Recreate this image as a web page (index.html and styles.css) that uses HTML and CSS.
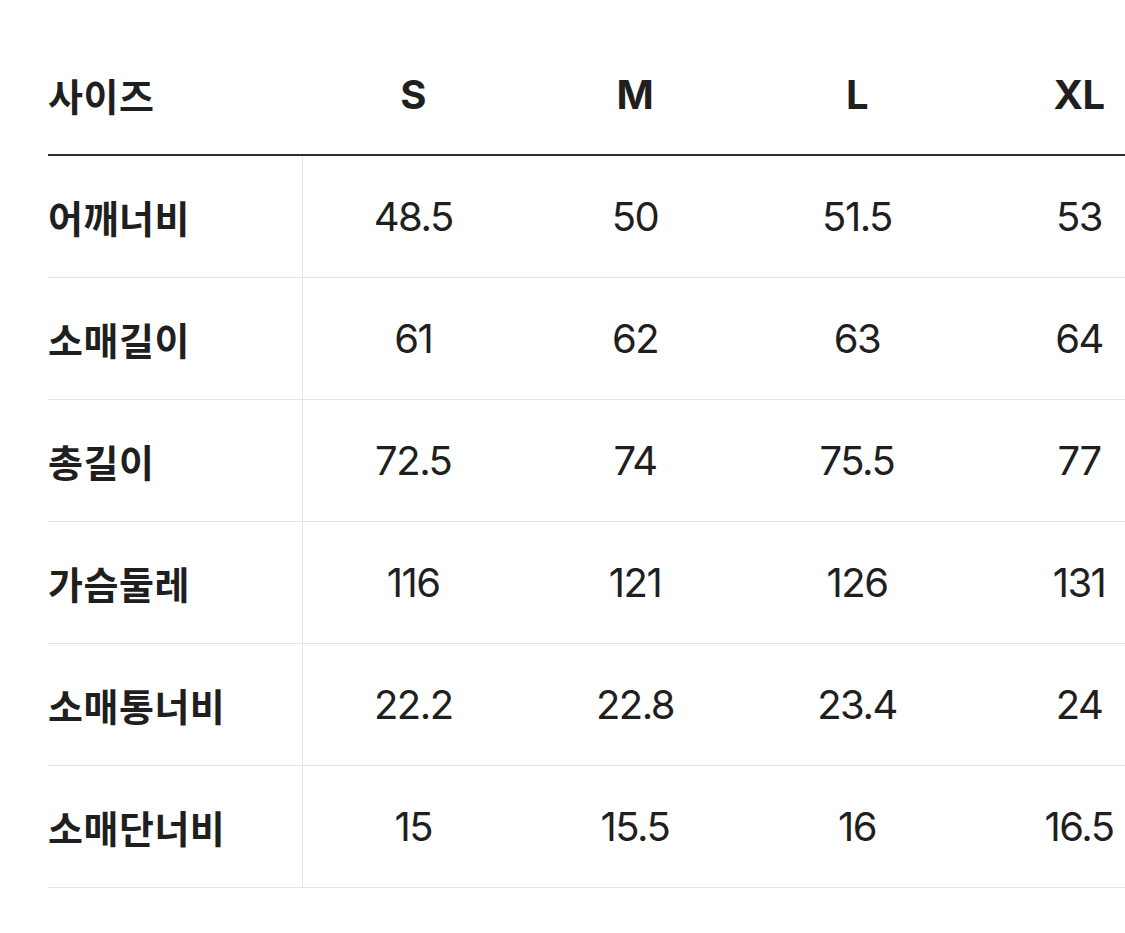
FILE: index.html
```html
<!DOCTYPE html>
<html lang="ko">
<head>
<meta charset="utf-8">
<title>사이즈</title>
<link rel="stylesheet" href="styles.css">
</head>
<body>
<div class="wrap">
<table class="size-table">
  <colgroup>
    <col class="col-label">
    <col class="col-size">
    <col class="col-size">
    <col class="col-size">
    <col class="col-size">
  </colgroup>
  <thead>
    <tr>
      <th class="label">사이즈</th>
      <th>S</th>
      <th>M</th>
      <th>L</th>
      <th>XL</th>
    </tr>
  </thead>
  <tbody>
    <tr><th class="label">어깨너비</th><td>48.5</td><td>50</td><td>51.5</td><td>53</td></tr>
    <tr><th class="label">소매길이</th><td>61</td><td>62</td><td>63</td><td>64</td></tr>
    <tr><th class="label">총길이</th><td>72.5</td><td>74</td><td>75.5</td><td>77</td></tr>
    <tr><th class="label">가슴둘레</th><td>116</td><td>121</td><td>126</td><td>131</td></tr>
    <tr><th class="label">소매통너비</th><td>22.2</td><td>22.8</td><td>23.4</td><td>24</td></tr>
    <tr><th class="label">소매단너비</th><td>15</td><td>15.5</td><td>16</td><td>16.5</td></tr>
  </tbody>
</table>
</div>
</body>
</html>
```

FILE: styles.css
```css
html, body {
  margin: 0;
  padding: 0;
  background: #ffffff;
  overflow: hidden;
}

.wrap {
  padding: 35px 0 0 48px;
  width: 1300px;
}

.size-table {
  border-collapse: collapse;
  table-layout: fixed;
  width: 1142px;
  color: #1f1f1f;
  font-family: Inter, "Noto Sans CJK KR", sans-serif;
}

.col-label { width: 254px; }
.col-size { width: 222px; }

.size-table th,
.size-table td {
  padding: 0;
  height: 121px;
  text-align: center;
  vertical-align: middle;
}

.size-table thead th {
  height: 119px;
  font-weight: 700;
  font-size: 40px;
  letter-spacing: -0.5px;
  border-bottom: 2px solid #2e2e2e;
}

.size-table td {
  font-size: 40px;
  font-weight: 400;
  letter-spacing: -1.5px;
  border-bottom: 1px solid #e3e3e3;
}

.size-table th.label {
  text-align: left;
  font-family: "Noto Sans CJK KR", sans-serif;
  font-weight: 700;
  font-size: 38px;
  letter-spacing: 0.5px;
}

.size-table tbody th.label {
  border-bottom: 1px solid #e3e3e3;
  border-right: 1px solid #e3e3e3;
}
```
